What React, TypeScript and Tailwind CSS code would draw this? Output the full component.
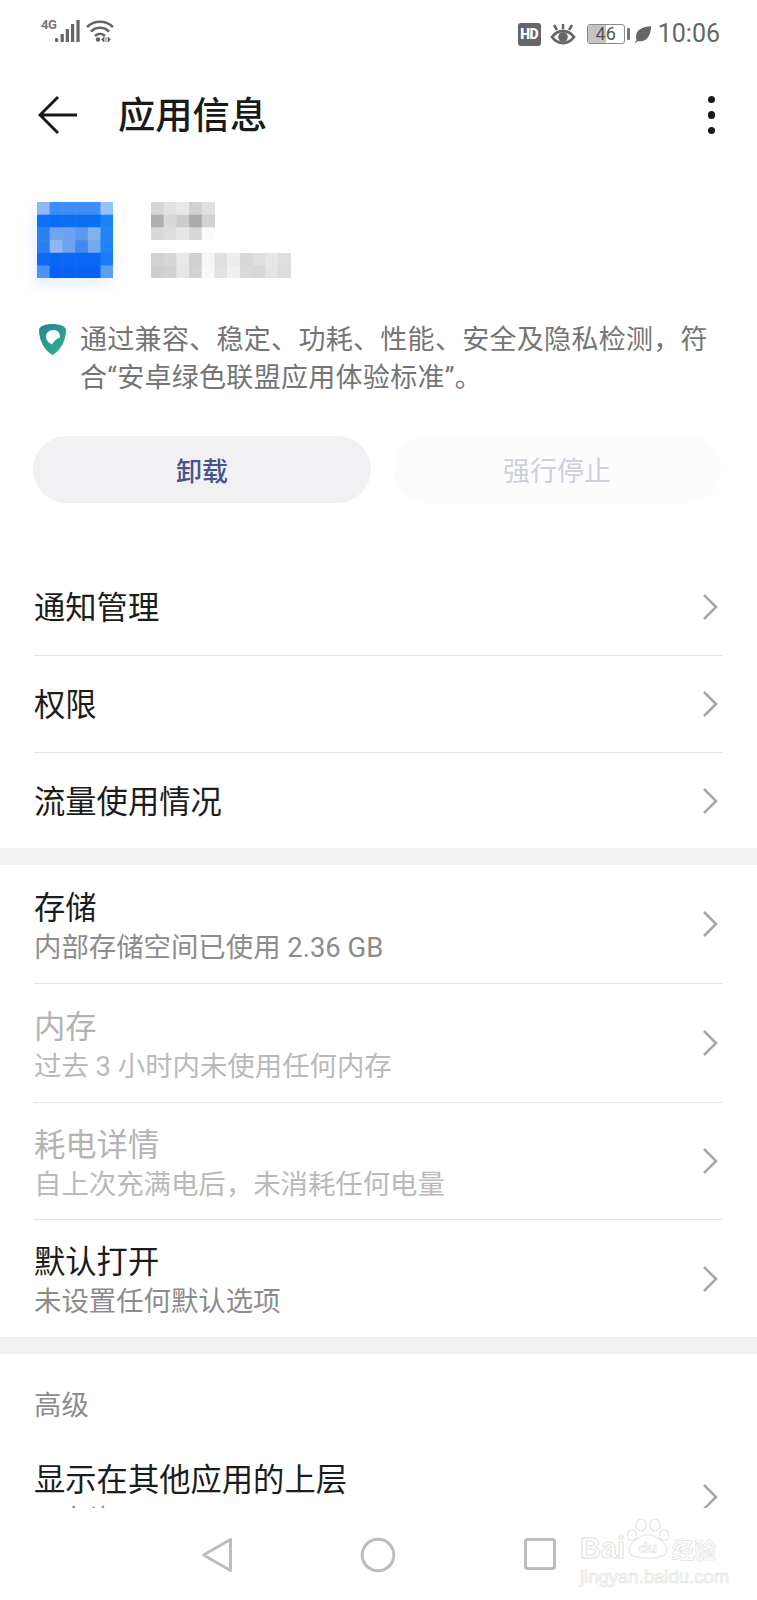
import React from "react";

const iconCells = [
  ["#8db8fb", "#3f8ef5", "#3f8ef5", "#3f8ef5", "#3f8ef5", "#93c3fb"],
  ["#0f72f5", "#0a6ff5", "#0a6ff5", "#0a6ff5", "#0a6ff5", "#1a85f8"],
  ["#2b80f2", "#6ea4f0", "#6da3ee", "#5c9aef", "#80b2ee", "#2484f5"],
  ["#2a80f2", "#8db6f3", "#6ba3ef", "#4288ef", "#73a8f0", "#1f82f5"],
  ["#1068f5", "#0a66f5", "#0a66f5", "#0a66f5", "#0a66f5", "#1a7bf7"],
  ["#4a92f5", "#0a62f5", "#0a62f5", "#0a62f5", "#0a62f5", "#5aa0f5"],
];

const nameCells = [
  ["#d6d6d6", "#e2e2e2", "#e8e8e8", "#d0d0d0", "#e0e0e0"],
  ["#b0b0b0", "#d8d8d8", "#cccccc", "#aaaaaa", "#d2d2d2"],
  ["#d8d8d8", "#dcdcdc", "#e6e6e6", "#d8d8d8", "#fafafa"],
];

const subCells = [
  ["#d2d2d2", "#d6d6d6", "#e8e8e8", "#d0d0d0", "#f6f6f6", "#e0e0e0", "#ececec", "#d8d8d8", "#dedede", "#e6e6e6", "#dedede"],
  ["#cecece", "#d2d2d2", "#e6e6e6", "#d2d2d2", "#f8f8f8", "#e2e2e2", "#f0f0f0", "#dadada", "#d8d8d8", "#e4e4e4", "#dcdcdc"],
];

function Mosaic({ cells, cell }: { cells: string[][]; cell: number }) {
  const w = cells[0].length * cell;
  const h = cells.length * cell;
  return (
    <svg width={w} height={h} viewBox={`0 0 ${w} ${h}`} className="block shrink-0">
      {cells.map((row, y) =>
        row.map((c, x) => <rect key={`${x}-${y}`} x={x * cell} y={y * cell} width={cell + 0.5} height={cell + 0.5} fill={c} />)
      )}
    </svg>
  );
}

function Chevron() {
  return (
    <svg width="16" height="28" viewBox="0 0 16 28" fill="none" className="shrink-0">
      <path d="M2 2l12 12L2 26" stroke="#a8a8a8" strokeWidth="2.6" />
    </svg>
  );
}

function Row({ title, sub, dim, h }: { title: string; sub?: string; dim?: boolean; h: string }) {
  return (
    <div className={`flex items-center justify-between pr-[5px] ${h}`}>
      <div className={`flex flex-col ${sub ? "pt-[5px]" : "pt-[4px]"}`}>
        <span className={`text-[31.3px] leading-[42px] ${dim ? "text-[#b4b4b4]" : "text-[#1c1c1c]"}`}>{title}</span>
        {sub && <span className={`text-[27.4px] leading-[36px] ${dim ? "text-[#bababa]" : "text-[#8c8c8c]"}`}>{sub}</span>}
      </div>
      <Chevron />
    </div>
  );
}

function StatusBar() {
  return (
    <div className="flex h-[70px] shrink-0 items-start justify-between pl-[41px] pr-[37px] pt-[19px]">
      <div className="flex items-start">
        <svg width="74" height="24" viewBox="0 0 74 24" fill="none">
          <rect x="14" y="19" width="3.2" height="4" rx="1.2" fill="#666" />
          <rect x="19.600" y="15" width="3.2" height="8" fill="#666" />
          <rect x="24.800" y="10" width="3.2" height="13" fill="#666" />
          <rect x="30" y="5" width="3.2" height="18" fill="#666" />
          <rect x="35.400" y="1" width="3.2" height="22" fill="#666" />
          <path d="M46 8c7-7 19-7 26 0M50 12.500c5-5 13-5 18 0M54 17c3-3 7-3 10 0" stroke="#666" strokeWidth="2.6" />
          <circle cx="57" cy="20.500" r="2.300" fill="#666" />
          <path d="M63 18l-2.500 2.500L63 23zM65 18v5M67 18l2.500 2.500L67 23z" fill="#666" stroke="#666" strokeWidth="0.8" />
        </svg>
        <span className="absolute left-[41px] top-[18px] text-[13px] font-bold leading-[14px] tracking-[-0.5px] text-[#777]">4G</span>
      </div>
      <div className="flex items-center">
        <span className="flex h-[23px] w-[23px] items-center justify-center rounded-[3px] bg-[#666] text-[14px] font-black leading-none tracking-[-0.5px] text-white">HD</span>
        <svg width="26" height="23" viewBox="0 0 26 23" fill="none" className="ml-[9px]">
          <path d="M2 14c6-8 16-8 22 0-6 8-16 8-22 0z" stroke="#666" strokeWidth="2.800" />
          <circle cx="13" cy="14" r="4.800" fill="#666" />
          <path d="M4 2l3 5M13 1v5M22 2l-3 5" stroke="#666" strokeWidth="2.500" />
        </svg>
        <div className="relative ml-[11px] flex h-[20px] w-[38px] items-center justify-center overflow-hidden rounded-[3px] border border-[#8a8a8a]">
          <div className="absolute inset-y-0 left-0 w-[18px] bg-[#c4c4c4]" />
          <span className="relative text-[18px] leading-none text-[#555]">46</span>
        </div>
        <div className="ml-[2px] h-[12px] w-[3px] rounded-[1px] bg-[#777]" />
        <svg width="17" height="17" viewBox="0 0 17 17" className="ml-[5px]">
          <path d="M16 0C8 1 1 3 1 11c0 1 .2 2 .6 3L0 16.500l1 .5 1.500-2C11 17 16 10 16 0z" fill="#666" />
        </svg>
        <span className="ml-[6px] text-[25px] leading-[30px] text-[#666]">10:06</span>
      </div>
    </div>
  );
}

function NavBar() {
  return (
    <div className="relative flex h-[92px] shrink-0 items-start bg-white pt-[29px]">
      <svg width="32" height="36" viewBox="0 0 32 36" fill="none" className="ml-[201px]">
        <path d="M29.500 2.500v31L2.500 18z" stroke="#bdbdbd" strokeWidth="3" strokeLinejoin="round" />
      </svg>
      <svg width="36" height="36" viewBox="0 0 36 36" fill="none" className="ml-[127px]">
        <circle cx="18" cy="18" r="15.800" stroke="#bdbdbd" strokeWidth="3" />
      </svg>
      <svg width="34" height="34" viewBox="0 0 34 34" fill="none" className="ml-[127px]">
        <rect x="2.500" y="2.500" width="29" height="29" rx="2" stroke="#bdbdbd" strokeWidth="3" />
      </svg>
    </div>
  );
}

function Watermark() {
  return (
    <div className="absolute left-[580px] top-[1518px] w-[140px] font-['Liberation_Sans',sans-serif] text-white">
      <svg width="44" height="42" viewBox="0 0 44 42" fill="none" stroke="#e4e4e4" strokeWidth="1.200" className="absolute left-[46px] top-0">
        <ellipse cx="15" cy="7" rx="5" ry="6" />
        <ellipse cx="29" cy="7" rx="5" ry="6" />
        <ellipse cx="6" cy="17" rx="4.500" ry="5.500" />
        <ellipse cx="38" cy="17" rx="4.500" ry="5.500" />
        <path d="M22 17c-8 0-19 8-19 15 0 7 12 8 19 8s19-1 19-8c0-7-11-15-19-15z" />
      </svg>
      <div className="mt-[19px] flex h-[22px] items-center text-[29px] font-bold leading-[22px] [-webkit-text-stroke:1px_#e2e2e2]">
        <span className="w-[46px]">Bai</span>
        <span className="w-[44px] text-center text-[15px] [-webkit-text-stroke:0.7px_#e2e2e2]">du</span>
        <span className="ml-[2px] whitespace-nowrap font-['Noto_Sans_CJK_SC'] text-[22px] [-webkit-text-stroke:0.7px_#e2e2e2]">经验</span>
      </div>
      <div className="mt-[7px] whitespace-nowrap text-[18.500px] leading-[22px] [-webkit-text-stroke:0.700px_#e2e2e2]">jingyan.baidu.com</div>
    </div>
  );
}

export default function App() {
  return (
    <div className="relative flex h-[1600px] w-[757px] flex-col overflow-hidden bg-white font-['Roboto','Noto_Sans_CJK_SC',sans-serif]">
      <StatusBar />

      {/* title bar */}
      <div className="flex h-[90px] shrink-0 items-center justify-between pl-[38px] pr-[42px]">
        <div className="flex items-center">
          <svg width="40" height="40" viewBox="0 0 40 40" fill="none">
            <path d="M20 2L2 20l18 18M2 20h37" stroke="#1a1a1a" strokeWidth="3" />
          </svg>
          <h1 className="ml-[40px] pt-[2px] text-[37.3px] font-medium leading-[48px] text-[#1a1a1a]">应用信息</h1>
        </div>
        <div className="flex flex-col gap-[8px]">
          <div className="h-[7.500px] w-[7.500px] rounded-full bg-[#1a1a1a]" />
          <div className="h-[7.500px] w-[7.500px] rounded-full bg-[#1a1a1a]" />
          <div className="h-[7.500px] w-[7.500px] rounded-full bg-[#1a1a1a]" />
        </div>
      </div>

      <div className="min-h-0 flex-1 overflow-hidden">
        {/* app summary */}
        <div className="ml-[37px] mt-[42px] flex h-[76px] items-start gap-[38px]">
          <div className="blur-[0.5px] shadow-[-4px_8px_12px_rgba(150,190,250,0.22)]">
            <Mosaic cells={iconCells} cell={12.7} />
          </div>
          <div className="flex flex-col gap-[13px] blur-[0.5px]">
            <Mosaic cells={nameCells} cell={12.7} />
            <Mosaic cells={subCells} cell={12.7} />
          </div>
        </div>

        <div className="ml-[39px] mt-[43px] flex gap-[14px]">
          <svg width="27" height="31" viewBox="0 0 27 31" className="mt-[3px] shrink-0">
            <defs>
              <linearGradient id="shield" x1="0" y1="0" x2="0.600" y2="1">
                <stop offset="0" stopColor="#2f7f95" />
                <stop offset="1" stopColor="#25b08c" />
              </linearGradient>
            </defs>
            <path d="M13.500 0C20 0 27 2 27 6c0 11-6 21-13.500 25C6 27 0 17 0 6c0-4 7-6 13.500-6z" fill="url(#shield)" />
            <path d="M14 6c5 0 7.500 3.500 7 7.500-3 1-6 3.500-8 7-3.500-1.500-6-4.500-6-8C7 9 10 6 14 6z" fill="#fff" />
          </svg>
          <p className="whitespace-nowrap text-[27px] leading-[38px] tracking-[0.3px] text-[#757575]">
            通过兼容、稳定、功耗、性能、安全及隐私检测，符
            <br />
            合“安卓绿色联盟应用体验标准”。
          </p>
        </div>

        <div className="mt-[39px] flex gap-[22px] pl-[33px] pr-[36px]">
          <button className="h-[67px] w-[338px] rounded-[34px] bg-[#f1f1f3] pt-[6px] text-[26px] font-medium text-[#47548f]">卸载</button>
          <button className="h-[67px] flex-1 rounded-[34px] bg-[#fcfcfd] pt-[6px] text-[27px] text-[#cdcfdd]">强行停止</button>
        </div>

        <div className="mt-[56px] px-[34px]">
          <Row title="通知管理" h="h-[97px] border-b border-[#e2e2e2]" />
          <Row title="权限" h="h-[97px] border-b border-[#e2e2e2]" />
          <Row title="流量使用情况" h="h-[95px]" />
        </div>

        <div className="h-[17px] bg-[#f1f1f1]" />

        <div className="px-[34px]">
          <Row title="存储" sub="内部存储空间已使用 2.36 GB" h="h-[119px] border-b border-[#e2e2e2]" />
          <Row title="内存" sub="过去 3 小时内未使用任何内存" dim h="h-[119px] border-b border-[#e2e2e2]" />
          <Row title="耗电详情" sub="自上次充满电后，未消耗任何电量" dim h="h-[117px] border-b border-[#e2e2e2]" />
          <Row title="默认打开" sub="未设置任何默认选项" h="h-[117px]" />
        </div>

        <div className="h-[17px] bg-[#f1f1f1]" />

        <div className="px-[34px]">
          <div className="flex h-[100px] items-center pt-[6px] text-[27.4px] text-[#8c8c8c]">高级</div>
          <div className="mt-[6px] flex items-center justify-between pr-[5px]">
            <div className="flex flex-col">
              <span className="text-[31.3px] leading-[42px] text-[#1c1c1c]">显示在其他应用的上层</span>
              <span className="text-[27.4px] leading-[36px] text-[#8c8c8c]">不允许</span>
            </div>
            <div className="pb-[4px]">
              <Chevron />
            </div>
          </div>
        </div>
      </div>

      <NavBar />
      <Watermark />
    </div>
  );
}
